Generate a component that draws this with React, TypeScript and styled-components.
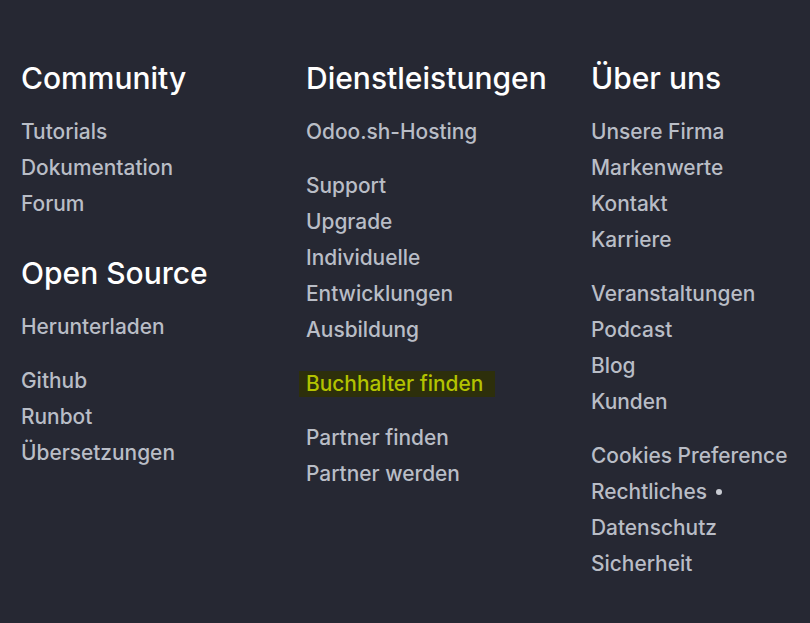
import React from "react";
import styled, { createGlobalStyle } from "styled-components";

const Global = createGlobalStyle`
  html, body { margin: 0; padding: 0; background: #262833; }
  body { font-family: Inter, "Noto Sans", sans-serif; }
`;

const Footer = styled.div`
  width: 810px;
  height: 623px;
  box-sizing: border-box;
  padding: 58px 0 0 21px;
  background: #262833;
  display: grid;
  grid-template-columns: 285px 285px 219px;
  align-items: start;
  overflow: hidden;
`;

const Column = styled.div`
  display: flex;
  flex-direction: column;
`;

const Heading = styled.h3<{ $spaced?: boolean }>`
  margin: ${(p) => (p.$spaced ? "31px" : "0")} 0 16px;
  font-size: 30px;
  line-height: 40px;
  font-weight: 500;
  color: #ffffff;
  white-space: nowrap;
`;

const Group = styled.div`
  display: flex;
  flex-direction: column;
  & + & { margin-top: 18px; }
`;

const Link = styled.a<{ $highlight?: boolean }>`
  align-self: flex-start;
  font-size: 20.9px;
  line-height: 36px;
  font-weight: 500;
  color: ${(p) => (p.$highlight ? "#b3c300" : "#b9bdc6")};
  text-decoration: none;
  white-space: nowrap;
  display: flex;
  align-items: center;
  ${(p) =>
    p.$highlight &&
    `
    background: #2d2f0b;
    margin-left: -7px;
    padding: 0 12px 0 7px;
    line-height: 26px;
    margin-top: 5px;
    margin-bottom: 5px;
  `}
`;

const Dot = styled.span`
  width: 6px;
  height: 6px;
  border-radius: 50%;
  background: #c9ccd3;
  margin-left: 9px;
`;

export default function App() {
  return (
    <>
      <Global />
      <Footer>
        <Column>
          <Heading>Community</Heading>
          <Group>
            <Link>Tutorials</Link>
            <Link>Dokumentation</Link>
            <Link>Forum</Link>
          </Group>
          <Heading $spaced>Open Source</Heading>
          <Group>
            <Link>Herunterladen</Link>
          </Group>
          <Group>
            <Link>Github</Link>
            <Link>Runbot</Link>
            <Link>Übersetzungen</Link>
          </Group>
        </Column>
        <Column>
          <Heading>Dienstleistungen</Heading>
          <Group>
            <Link>Odoo.sh-Hosting</Link>
          </Group>
          <Group>
            <Link>Support</Link>
            <Link>Upgrade</Link>
            <Link>Individuelle</Link>
            <Link>Entwicklungen</Link>
            <Link>Ausbildung</Link>
          </Group>
          <Group>
            <Link $highlight>Buchhalter finden</Link>
          </Group>
          <Group>
            <Link>Partner finden</Link>
            <Link>Partner werden</Link>
          </Group>
        </Column>
        <Column>
          <Heading>Über uns</Heading>
          <Group>
            <Link>Unsere Firma</Link>
            <Link>Markenwerte</Link>
            <Link>Kontakt</Link>
            <Link>Karriere</Link>
          </Group>
          <Group>
            <Link>Veranstaltungen</Link>
            <Link>Podcast</Link>
            <Link>Blog</Link>
            <Link>Kunden</Link>
          </Group>
          <Group>
            <Link>Cookies Preference</Link>
            <Link>
              Rechtliches
              <Dot />
            </Link>
            <Link>Datenschutz</Link>
            <Link>Sicherheit</Link>
          </Group>
        </Column>
      </Footer>
    </>
  );
}
